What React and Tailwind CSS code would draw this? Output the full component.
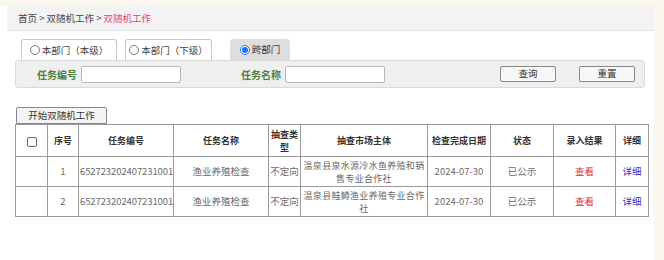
import React from 'react'

const rows = [
  { no: 1, code: '652723202407231001', name: '渔业养殖检查', type: '不定向', subject: '温泉县泉水源冷水鱼养殖和销售专业合作社', date: '2024-07-30', status: '已公示' },
  { no: 2, code: '652723202407231001', name: '渔业养殖检查', type: '不定向', subject: '温泉县鲑鳟渔业养殖专业合作社', date: '2024-07-30', status: '已公示' },
]

function Radio({ checked }) {
  if (checked) {
    return (
      <span className="inline-flex w-[10px] h-[10px] rounded-full border border-[#2f6fde] bg-white items-center justify-center">
        <span className="w-[6px] h-[6px] rounded-full bg-[#1a73e8]" />
      </span>
    )
  }
  return <span className="inline-block w-[10px] h-[10px] rounded-full border border-[#777] bg-white" />
}

export default function App() {
  const font = { fontFamily: '"Noto Sans CJK SC", "Noto Sans", sans-serif' }
  return (
    <div style={font} className="w-[664px] h-[260px] bg-[#fcf6f0] pt-[6px] pr-[10px] overflow-hidden">
      <div className="bg-white h-full">
        {/* breadcrumb */}
        <div className="ml-[7px] h-[25px] bg-[#f3f3f3] border-b border-[#e4e4e4] flex items-center pl-[11px] text-[9.5px] text-[#444]">
          <span>首页 &gt; 双随机工作 &gt; </span>
          <span className="text-[#e0457b] ml-[2px]">双随机工作</span>
        </div>

        <div className="pl-[15px] pr-[9px]">
          {/* tabs */}
          <div className="flex items-end mt-[8px] pl-[6px] h-[21px]">
            <div className="w-[96px] h-[21px] bg-white border border-b-0 border-[#c8c8c8] rounded-t-[3px] flex items-center justify-center gap-[2px] text-[9.5px] text-[#444]">
              <Radio />
              <span>本部门（本级）</span>
            </div>
            <div className="ml-[8px] w-[87px] h-[21px] bg-white border border-b-0 border-[#c8c8c8] rounded-t-[3px] flex items-center justify-center gap-[2px] text-[9.5px] text-[#444]">
              <Radio />
              <span>本部门（下级）</span>
            </div>
            <div className="ml-[18px] w-[60px] h-[21px] bg-[#dedede] rounded-t-[3px] flex items-center justify-center gap-[2px] text-[9.5px] text-[#333]">
              <Radio checked />
              <span>跨部门</span>
            </div>
          </div>

          {/* search bar */}
          <div className="h-[28px] bg-[#efefef] border border-[#dadada] rounded-[3px] flex items-center pl-[21px] pr-[9px]">
            <span className="text-[10px] font-bold text-[#4f7f3b] w-[40px]">任务编号</span>
            <input className="ml-[4px] w-[100px] h-[17px] bg-white border border-[#b8b8b8] rounded-[2px]" />
            <span className="ml-[60px] text-[10px] font-bold text-[#4f7f3b] w-[40px]">任务名称</span>
            <input className="ml-[4px] w-[100px] h-[17px] bg-white border border-[#b8b8b8] rounded-[2px]" />
            <button className="ml-auto w-[56px] h-[16px] bg-[#f7f7f7] border border-[#888] rounded-[2px] text-[9.5px] text-[#333] leading-none">查询</button>
            <button className="ml-[23px] w-[56px] h-[16px] bg-[#f7f7f7] border border-[#888] rounded-[2px] text-[9.5px] text-[#333] leading-none">重置</button>
          </div>

          {/* start button */}
          <button className="mt-[19px] ml-[1px] w-[91px] h-[17px] bg-[#f4f4f4] border border-[#888] rounded-t-[2px] text-[9.5px] text-[#333] leading-none block">开始双随机工作</button>

          {/* table */}
          <table className="w-[633px] border-collapse table-fixed text-[9.5px] leading-[13px]">
            <colgroup>
              <col className="w-[32px]" />
              <col className="w-[31px]" />
              <col className="w-[95px]" />
              <col className="w-[95px]" />
              <col className="w-[32px]" />
              <col className="w-[127px]" />
              <col className="w-[63px]" />
              <col className="w-[63px]" />
              <col className="w-[62px]" />
              <col className="w-[33px]" />
            </colgroup>
            <thead>
              <tr className="h-[32px] text-[#333] font-bold text-[9px]">
                <th className="border border-[#9a9a9a]">
                  <span className="inline-block w-[10px] h-[10px] border border-[#666] rounded-[2px] align-middle" />
                </th>
                <th className="border border-[#9a9a9a]">序号</th>
                <th className="border border-[#9a9a9a]">任务编号</th>
                <th className="border border-[#9a9a9a]">任务名称</th>
                <th className="border border-[#9a9a9a] px-[2px]">抽查类型</th>
                <th className="border border-[#9a9a9a]">抽查市场主体</th>
                <th className="border border-[#9a9a9a]">检查完成日期</th>
                <th className="border border-[#9a9a9a]">状态</th>
                <th className="border border-[#9a9a9a]">录入结果</th>
                <th className="border border-[#9a9a9a]">详细</th>
              </tr>
            </thead>
            <tbody className="text-[#6a6a6a]">
              {rows.map((r) => (
                <tr key={r.no} className="h-[30px]">
                  <td className="border border-[#9a9a9a]" />
                  <td className="border border-[#9a9a9a] text-center">{r.no}</td>
                  <td className="border border-[#9a9a9a] text-left pl-[1px] tracking-[-0.1px] whitespace-nowrap overflow-hidden">{r.code}</td>
                  <td className="border border-[#9a9a9a] text-center">{r.name}</td>
                  <td className="border border-[#9a9a9a] text-center whitespace-nowrap">{r.type}</td>
                  <td className="border border-[#9a9a9a] text-center px-[2px] text-[9px] tracking-[0.3px] align-top pt-[2px]">{r.subject}</td>
                  <td className="border border-[#9a9a9a] text-center">{r.date}</td>
                  <td className="border border-[#9a9a9a] text-center">{r.status}</td>
                  <td className="border border-[#9a9a9a] text-center text-[#d6303a]">查看</td>
                  <td className="border border-[#9a9a9a] text-center text-[#3434a8]">详细</td>
                </tr>
              ))}
            </tbody>
          </table>
        </div>
      </div>
    </div>
  )
}
